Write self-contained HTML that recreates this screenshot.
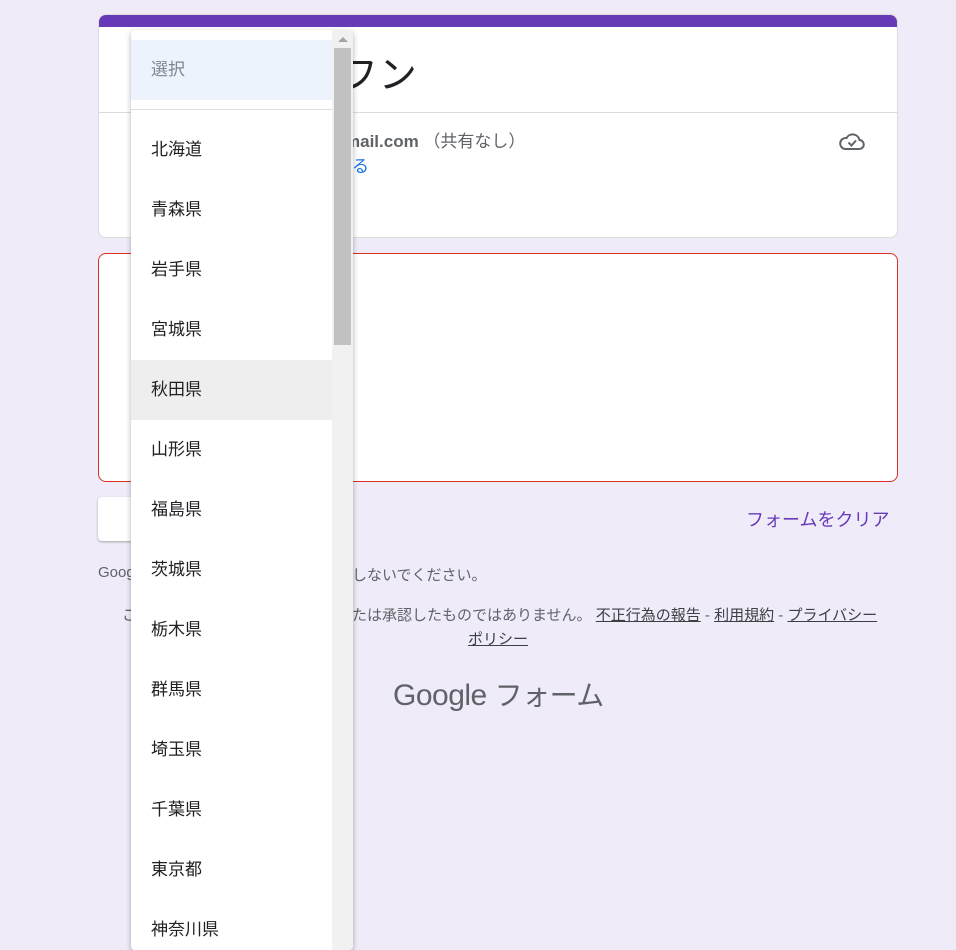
<!DOCTYPE html>
<html><head><meta charset="utf-8"><style>
body{margin:0;width:956px;height:929px;background:#f0ebf8;position:relative;overflow:hidden;font-family:"Liberation Sans","Noto Sans CJK JP",sans-serif;}
.a{position:absolute}
.card{background:#fff;border:1px solid #dadce0;border-radius:8px;}
.item{position:absolute;left:0;width:201px;height:60px;line-height:60px;padding-left:20px;font-size:17px;color:#202124;box-sizing:border-box}
.f{font-size:15px;color:#5f6368}
.f u{color:#3c4043}
</style></head><body>
<div class="a card" style="left:98px;top:14px;width:798px;height:222px;overflow:hidden">
 <div class="a" style="left:0;top:0;width:100%;height:12px;background:#673ab7"></div>
 <div class="a" style="left:0;top:97px;width:100%;height:1px;background:#dadce0"></div>
 <div class="a" style="left:241px;top:29px;font-size:38px;color:#202124">フン</div>
 <div class="a" style="left:246px;top:112px;font-size:17px;color:#5f6368"><b>mail.com</b> （共有なし）</div>
 <div class="a" style="left:253px;top:137px;font-size:17px;color:#1a73e8">る</div>
 <svg class="a" style="left:740px;top:116px" width="26" height="22" viewBox="0 0 26 22"><path d="M6 18h14a4.5 4.5 0 0 0 .5-9 7 7 0 0 0-13-2A5.5 5.5 0 0 0 6 18z" fill="none" stroke="#5f6368" stroke-width="2"/><path d="M9.5 11.5l3 3 4.5-5" fill="none" stroke="#5f6368" stroke-width="2"/></svg>
</div>
<div class="a" style="left:98px;top:253px;width:798px;height:227px;background:#fff;border:1px solid #d93025;border-radius:8px"></div>
<div class="a" style="left:98px;top:497px;width:60px;height:44px;background:#fff;border-radius:4px;box-shadow:0 1px 2px rgba(0,0,0,.3)"></div>
<div class="a" style="left:746px;top:506px;font-size:18px;color:#673ab7">フォームをクリア</div>
<div class="a f" style="left:98px;top:564px">Goog</div>
<div class="a f" style="left:352px;top:564px">しないでください。</div>
<div class="a f" style="left:122px;top:604px">こ</div>
<div class="a f" style="left:352px;top:604px">たは承認したものではありません。 <u>不正行為の報告</u> - <u>利用規約</u> - <u>プライバシー</u></div>
<div class="a f" style="left:468px;top:628px"><u>ポリシー</u></div>
<div class="a" style="left:393px;top:674px;font-size:30px;color:#5f6368;letter-spacing:-0.5px">Google <span style="font-size:28px">フォーム</span></div>

<div class="a" style="left:131px;top:30px;width:222px;height:920px;background:#fff;box-shadow:0 2px 6px rgba(0,0,0,.3);border-radius:4px;overflow:hidden">
 <div class="item" style="top:10px;background:#edf3fd;color:#80868b">選択</div>
 <div class="a" style="left:0;top:79px;width:201px;height:1px;background:#dadce0"></div>
 <div class="item" style="top:90px">北海道</div>
 <div class="item" style="top:150px">青森県</div>
 <div class="item" style="top:210px">岩手県</div>
 <div class="item" style="top:270px">宮城県</div>
 <div class="item" style="top:330px;background:#eeeeee">秋田県</div>
 <div class="item" style="top:390px">山形県</div>
 <div class="item" style="top:450px">福島県</div>
 <div class="item" style="top:510px">茨城県</div>
 <div class="item" style="top:570px">栃木県</div>
 <div class="item" style="top:630px">群馬県</div>
 <div class="item" style="top:690px">埼玉県</div>
 <div class="item" style="top:750px">千葉県</div>
 <div class="item" style="top:810px">東京都</div>
 <div class="item" style="top:870px">神奈川県</div>
 <div class="a" style="left:201px;top:0;width:21px;height:100%;background:#f1f1f1"></div>
 <div class="a" style="left:207px;top:7px;width:0;height:0;border-left:5px solid transparent;border-right:5px solid transparent;border-bottom:5px solid #a3a3a3"></div>
 <div class="a" style="left:203px;top:18px;width:17px;height:297px;background:#c1c1c1"></div>
</div>
</body></html>
